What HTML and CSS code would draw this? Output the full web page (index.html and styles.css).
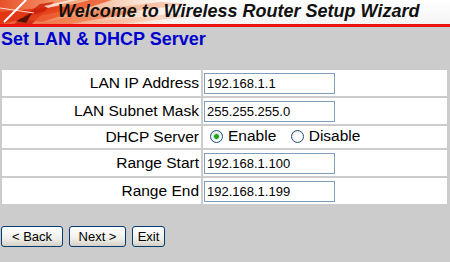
FILE: index.html
```html
<!DOCTYPE html>
<html lang="en">
<head>
  <meta charset="UTF-8" />
  <title>Wireless Router Setup Wizard</title>
  <link rel="stylesheet" href="styles.css">
</head>
<body>
  <div class="banner">
    <svg class="banner-art" width="200" height="24" viewBox="0 0 200 24">
      <defs>
        <linearGradient id="fade" x1="0" y1="0" x2="1" y2="0">
          <stop offset="0" stop-color="#e8502a" />
          <stop offset="0.3" stop-color="#f39a70" />
          <stop offset="0.65" stop-color="#fadcc8" />
          <stop offset="1" stop-color="#ffffff" stop-opacity="0" />
        </linearGradient>
      </defs>
      <rect width="200" height="24" fill="url(#fade)" />
      <polygon points="0,24 0,12 60,6 72,9" fill="#e0300e" opacity="0.85" />
      <polygon points="14,24 40,4 54,2 32,24" fill="#c81e08" opacity="0.8" />
      <polygon points="20,18 90,0 112,0 42,22" fill="#e8481c" opacity="0.7" />
      <polygon points="36,24 100,10 140,12 70,24" fill="#ee7040" opacity="0.6" />
      <polygon points="60,14 160,2 190,4 80,18" fill="#f0905e" opacity="0.45" />
      <polygon points="90,22 170,14 196,16 120,24" fill="#f4a07a" opacity="0.35" />
      <polygon points="16,21 32,13 26,23" fill="#4a0a04" opacity="0.85" />
      <polygon points="44,6 70,0 76,0 48,8" fill="#fff2e8" opacity="0.8" />
      <line x1="4" y1="22" x2="26" y2="0" stroke="#ffffff" stroke-width="2" />
      <line x1="0" y1="8" x2="34" y2="13" stroke="#ffffff" stroke-width="1" opacity="0.8" />
    </svg>
    <span class="banner-title">Welcome to Wireless Router Setup Wizard</span>
  </div>

  <h2 class="page-title">Set LAN &amp; DHCP Server</h2>

  <table class="setup-table">
    <tr>
      <td class="label">LAN IP Address</td>
      <td class="field"><input type="text" class="text-input" value="192.168.1.1" /></td>
    </tr>
    <tr>
      <td class="label">LAN Subnet Mask</td>
      <td class="field"><input type="text" class="text-input" value="255.255.255.0" /></td>
    </tr>
    <tr class="radio-row">
      <td class="label">DHCP Server</td>
      <td class="field">
        <label class="radio-opt"><input type="radio" name="dhcp" class="radio" checked /> Enable</label>
        <label class="radio-opt"><input type="radio" name="dhcp" class="radio" /> Disable</label>
      </td>
    </tr>
    <tr>
      <td class="label">Range Start</td>
      <td class="field"><input type="text" class="text-input" value="192.168.1.100" /></td>
    </tr>
    <tr>
      <td class="label">Range End</td>
      <td class="field"><input type="text" class="text-input" value="192.168.1.199" /></td>
    </tr>
  </table>

  <div class="actions">
    <button class="btn btn-back">&lt; Back</button>
    <button class="btn btn-next">Next &gt;</button>
    <button class="btn btn-exit">Exit</button>
  </div>
</body>
</html>
```

FILE: styles.css
```css
body {
  margin: 0;
  background-color: #cccccc;
  font-family: "Liberation Sans", Arial, sans-serif;
  color: #000000;
}
.banner {
  position: relative;
  height: 24px;
  background: linear-gradient(to bottom, #ffffff, #f4f4f4);
  border-bottom: 3px solid #e8140c;
  overflow: hidden;
}
.banner-art {
  position: absolute;
  left: 0;
  top: 0;
}
.banner-title {
  position: relative;
  display: block;
  padding-left: 58px;
  font-size: 18px;
  font-weight: bold;
  font-style: italic;
  line-height: 22px;
  color: #111111;
}
.page-title {
  margin: 2px 0 0;
  padding-left: 1px;
  font-size: 18px;
  line-height: 20px;
  font-weight: bold;
  color: #0000cc;
}
.setup-table {
  margin-top: 19px;
  width: 449px;
  border-spacing: 2px;
  border-collapse: separate;
}
.setup-table td {
  background-color: #ffffff;
  padding: 0;
  height: 26px;
}
.setup-table .radio-row td {
  height: 22px;
}
.label {
  width: 197px;
  padding-right: 2px !important;
  text-align: right;
  font-size: 15.5px;
}
.field {
  padding-left: 1px !important;
}
.text-input {
  display: block;
  box-sizing: border-box;
  width: 131px;
  height: 21px;
  margin: 0;
  padding: 0 2px;
  border: 1px solid #7f9db9;
  font-family: "Liberation Sans", Arial, sans-serif;
  font-size: 13px;
  color: #000000;
}
.radio-opt {
  display: inline-flex;
  align-items: center;
  font-size: 15.5px;
  margin-left: 6px;
  margin-right: 4px;
}
.radio {
  appearance: none;
  box-sizing: border-box;
  width: 13px;
  height: 13px;
  margin: 0 5px 0 0;
  border: 1px solid #1c5180;
  border-radius: 50%;
  background: radial-gradient(circle at 60% 60%, #ffffff 30%, #dcdcd4 100%);
}
.radio:checked {
  background: radial-gradient(circle, #21a121 0 2px, #7fd67f 2.5px, transparent 3.5px),
    radial-gradient(circle at 60% 60%, #ffffff 30%, #dcdcd4 100%);
}
.actions {
  display: flex;
  gap: 6px;
  margin-top: 20px;
  padding-left: 1px;
}
.btn {
  box-sizing: border-box;
  height: 21px;
  padding: 0;
  border: 1px solid #003c74;
  border-radius: 3px;
  background: linear-gradient(to bottom, #ffffff, #f0f0ea 60%, #d6d0c5);
  font-family: "Liberation Sans", Arial, sans-serif;
  font-size: 13px;
  color: #000000;
  cursor: pointer;
}
.btn-back {
  width: 62px;
}
.btn-next {
  width: 57px;
}
.btn-exit {
  width: 33px;
}
```
